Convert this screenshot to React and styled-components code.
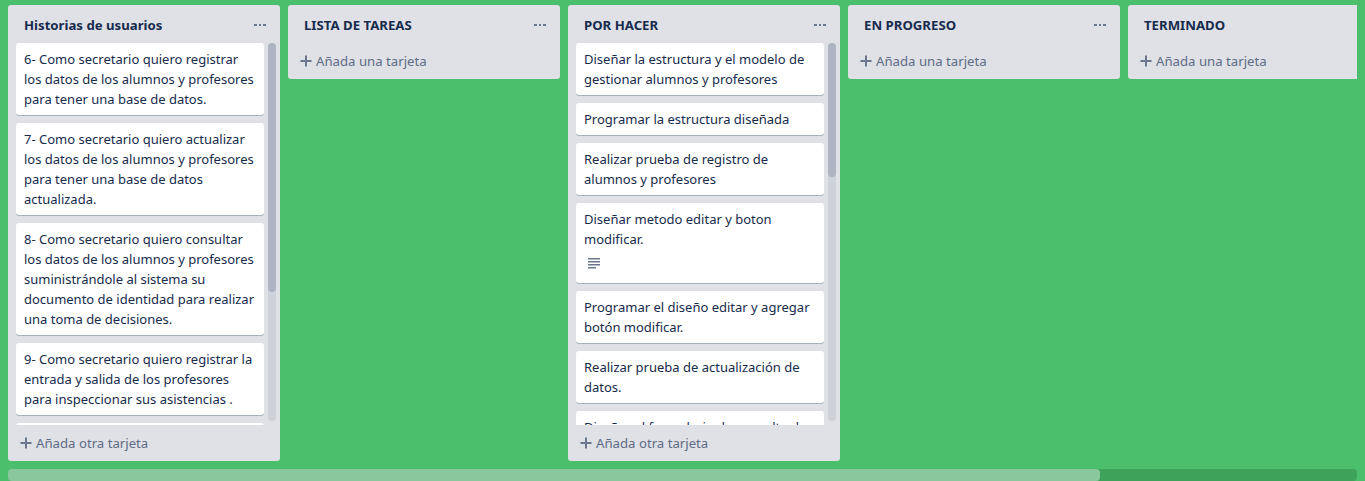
import styled, { createGlobalStyle } from "styled-components";

const lists = [
  {
    title: "Historias de usuarios",
    addLabel: "Añada otra tarjeta",
    thumb: 249,
    cards: [
      { lines: ["6- Como secretario quiero registrar", "los datos de los alumnos y profesores", "para tener una base de datos."] },
      { lines: ["7- Como secretario quiero actualizar", "los datos de los alumnos y profesores", "para tener una base de datos", "actualizada."] },
      {
        lines: [
          "8- Como secretario quiero consultar",
          "los datos de los alumnos y profesores",
          "suministrándole al sistema su",
          "documento de identidad para realizar",
          "una toma de decisiones.",
        ],
      },
      { lines: ["9- Como secretario quiero registrar la", "entrada y salida de los profesores", "para inspeccionar sus asistencias ."] },
      { lines: ["10- Como secretario quiero generar", "reportes de asistencia de los", "profesores para llevar un control."] },
      { lines: ["11- Como profesor quiero consultar", "mi horario de clases."] },
    ],
  },
  { title: "LISTA DE TAREAS", addLabel: "Añada una tarjeta", cards: [] },
  {
    title: "POR HACER",
    addLabel: "Añada otra tarjeta",
    thumb: 134,
    cards: [
      { lines: ["Diseñar la estructura y el modelo de", "gestionar alumnos y profesores"] },
      { lines: ["Programar la estructura diseñada"] },
      { lines: ["Realizar prueba de registro de", "alumnos y profesores"] },
      { lines: ["Diseñar metodo editar y boton", "modificar."], description: true },
      { lines: ["Programar el diseño editar y agregar", "botón modificar."] },
      { lines: ["Realizar prueba de actualización de", "datos."] },
      { lines: ["Diseñar el formulario de consulta de", "alumnos y profesores"] },
      { lines: ["Programar el formulario de consulta"] },
      { lines: ["Realizar prueba de consulta de", "datos."] },
      { lines: ["Diseñar el registro de entrada y", "salida de profesores"] },
      { lines: ["Programar el registro de asistencias"] },
      { lines: ["Realizar prueba de registro de", "asistencias."] },
    ],
  },
  { title: "EN PROGRESO", addLabel: "Añada una tarjeta", cards: [] },
  { title: "TERMINADO", addLabel: "Añada una tarjeta", cards: [], noMenu: true },
];

function Dots() {
  return (
    <svg width="12" height="2" viewBox="0 0 12 2">
      <rect x="0" y="0" width="3" height="2" fill="#6b778c" />
      <rect x="5" y="0" width="2" height="2" fill="#6b778c" />
      <rect x="9" y="0" width="3" height="2" fill="#6b778c" />
    </svg>
  );
}

function Plus() {
  return (
    <svg width="12" height="12" viewBox="0 0 12 12">
      <path d="M6 0.5v11M0.5 6h11" stroke="#6b778c" strokeWidth="2" />
    </svg>
  );
}

function DescriptionIcon() {
  return (
    <svg width="12" height="11" viewBox="0 0 12 11">
      <g fill="#6b778c">
        <rect x="0" y="0" width="12" height="1.5" />
        <rect x="0" y="3" width="12" height="1.5" />
        <rect x="0" y="6" width="12" height="1.5" />
        <rect x="0" y="9" width="8" height="1.5" />
      </g>
    </svg>
  );
}

function App() {
  return (
    <>
      <GlobalStyle />
      <Page>
        <Board>
          {lists.map((list) => (
            <List key={list.title}>
              <ListHeader>
                <ListTitle>{list.title}</ListTitle>
                {!list.noMenu && (
                  <MenuButton>
                    <Dots />
                  </MenuButton>
                )}
              </ListHeader>
              {list.cards.length > 0 && (
                <CardsArea>
                  <Cards>
                    {list.cards.map((card, i) => (
                      <Card key={i}>
                        {card.lines.map((line, j) => (
                          <CardLine key={j}>{line}</CardLine>
                        ))}
                        {card.description && (
                          <Badges>
                            <DescriptionIcon />
                          </Badges>
                        )}
                      </Card>
                    ))}
                  </Cards>
                  <VTrack>
                    <VThumb $size={list.thumb} />
                  </VTrack>
                </CardsArea>
              )}
              <AddCard>
                <Plus />
                <span>{list.addLabel}</span>
              </AddCard>
            </List>
          ))}
        </Board>
        <HTrack>
          <HThumb $size={1092} />
        </HTrack>
      </Page>
    </>
  );
}

export default App;

const GlobalStyle = createGlobalStyle`
  html, body {
    margin: 0;
    background: #4bbf6b;
    overflow: hidden;
  }
  body {
    font-family: "Noto Sans", "Liberation Sans", sans-serif;
    color: #172b4d;
  }
`;

const Page = styled.div`
  height: 481px;
  box-sizing: border-box;
  padding: 5px 8px 0;
  display: flex;
  flex-direction: column;
`;

const Board = styled.div`
  flex: 1 1 auto;
  min-height: 0;
  padding-bottom: 8px;
  display: flex;
  align-items: flex-start;
  overflow: hidden;
`;

const List = styled.div`
  flex: 0 0 272px;
  width: 272px;
  max-height: 100%;
  margin-right: 8px;
  background: #dfe1e6;
  border-radius: 3px;
  display: flex;
  flex-direction: column;
  box-sizing: border-box;
`;

const ListHeader = styled.div`
  display: flex;
  align-items: center;
  justify-content: space-between;
  padding: 10px 14px 8px 16px;
  flex: 0 0 auto;
`;

const ListTitle = styled.h2`
  margin: 0;
  font-size: 13.2px;
  line-height: 20px;
  font-weight: 700;
  color: #172b4d;
`;

const MenuButton = styled.div`
  display: flex;
  align-items: center;
  height: 20px;
`;

const CardsArea = styled.div`
  flex: 1 1 auto;
  min-height: 0;
  display: flex;
  gap: 4px;
  margin: 0 4px 0 8px;
`;

const Cards = styled.div`
  flex: 1 1 auto;
  min-width: 0;
  overflow: hidden;
`;

const VTrack = styled.div`
  flex: 0 0 8px;
  margin-bottom: 4px;
  border-radius: 4px;
  background: rgba(9, 30, 66, 0.08);
`;

const VThumb = styled.div`
  height: ${(p) => p.$size}px;
  border-radius: 4px;
  background: rgba(9, 30, 66, 0.16);
`;

const Card = styled.div`
  background: #fff;
  border-radius: 3px;
  box-shadow: 0 1px 0 rgba(9, 30, 66, 0.25);
  padding: 6px 8px 6px;
  margin-bottom: 8px;
`;

const CardLine = styled.div`
  font-size: 13px;
  line-height: 20px;
  color: #172b4d;
  white-space: nowrap;
`;

const Badges = styled.div`
  display: flex;
  align-items: center;
  height: 28px;
  padding-left: 4px;
`;

const AddCard = styled.div`
  flex: 0 0 auto;
  display: flex;
  align-items: center;
  gap: 4px;
  padding: 8px 4px 8px 12px;
  font-size: 13.2px;
  line-height: 20px;
  color: #5e6c84;
`;

const HTrack = styled.div`
  flex: 0 0 12px;
  border-radius: 4px;
  background: rgba(0, 0, 0, 0.15);
`;

const HThumb = styled.div`
  width: ${(p) => p.$size}px;
  height: 100%;
  border-radius: 4px;
  background: rgba(255, 255, 255, 0.4);
`;
